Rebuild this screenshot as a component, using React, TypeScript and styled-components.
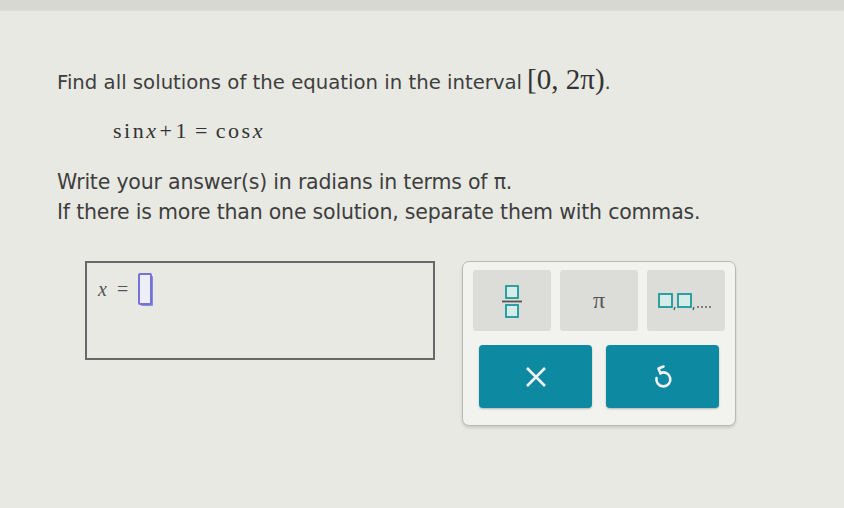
import React from "react";
import styled, { createGlobalStyle } from "styled-components";

const GlobalStyle = createGlobalStyle`
    html, body {
        margin: 0;
        padding: 0;
        background: #e8e9e3;
    }
    body {
        width: 844px;
        height: 508px;
        overflow: hidden;
        font-family: "DejaVu Sans", "Open Sans", sans-serif;
        color: #3e3e3e;
    }
`;

const TopStrip = styled.div`
    height: 10px;
    background: #d7d8d2;
    box-shadow: 0 1px 2px rgba(0, 0, 0, 0.06);
`;

const Question = styled.section`
    padding: 54px 0 0 57px;
    display: flex;
    flex-direction: column;
`;

const Prompt = styled.p`
    margin: 0;
    height: 30px;
    font-size: 19.7px;
    line-height: 30px;
    display: flex;
    align-items: baseline;
    white-space: pre;
`;

const Interval = styled.span`
    font-family: "Liberation Serif", "DejaVu Serif", serif;
    font-size: 29px;
    line-height: 30px;
    color: #333;
    margin-left: 5px;
`;

const Equation = styled.div`
    margin: 25px 0 0 56px;
    display: flex;
    align-items: baseline;
    font-family: "Liberation Serif", "DejaVu Serif", serif;
    font-size: 22px;
    line-height: 24px;
    letter-spacing: 2.5px;
    color: #333;
    white-space: pre;
`;

const Var = styled.i`
    font-style: italic;
`;

const Op = styled.span<{ $space: number }>`
    margin: 0 ${(p) => p.$space}px;
`;

const Instructions = styled.div`
    margin-top: 24px;
    font-size: 20.5px;
    line-height: 30px;
    letter-spacing: -0.2px;
`;

const AnswerRow = styled.div`
    margin: 34px 0 0 28px;
    display: flex;
    align-items: flex-start;
    gap: 27px;
`;

const AnswerBox = styled.div`
    width: 346px;
    height: 95px;
    border: 2px solid #686868;
    display: flex;
    align-items: flex-start;
`;

const AnswerLine = styled.div`
    margin: 10px 0 0 11px;
    display: flex;
    align-items: center;
    gap: 10px;
    font-family: "Liberation Serif", "DejaVu Serif", serif;
    font-size: 20px;
    color: #555;
`;

const Slot = styled.span`
    width: 10px;
    height: 28px;
    border: 2px solid #7472d6;
    border-radius: 2px;
    background: #eeeefb;
    box-shadow: 2px 2px 0 -1px #8b89dc;
`;

const Keypad = styled.div`
    padding: 8px 10px 17px 10px;
    background: #f2f3ef;
    border: 1px solid #b9bab5;
    border-radius: 7px;
    box-shadow: 0 2px 3px rgba(0, 0, 0, 0.12);
    display: flex;
    flex-direction: column;
    gap: 14px;
`;

const KeyRow = styled.div`
    display: grid;
    grid-template-columns: repeat(3, 78px);
    gap: 9px;
`;

const Key = styled.button`
    height: 61px;
    border: none;
    border-radius: 3px;
    background: #dcddd8;
    color: #555;
    display: flex;
    align-items: center;
    justify-content: center;
    padding: 0;
    font-family: "Liberation Serif", "DejaVu Serif", serif;
    font-size: 24px;
`;

const ActionRow = styled.div`
    display: grid;
    grid-template-columns: 113px 113px;
    gap: 14px;
    padding: 0 6px;
`;

const ActionKey = styled.button`
    height: 63px;
    border: none;
    border-radius: 4px;
    background: #0d8aa2;
    box-shadow: 0 1px 2px rgba(0, 0, 0, 0.25);
    display: flex;
    align-items: center;
    justify-content: center;
    padding: 0;
`;

const teal = "#1a9a9a";

const FractionIcon = () => (
    <svg width="22" height="36" viewBox="0 0 22 36">
        <rect x="5" y="3" width="12" height="12" fill="#d6ece9" stroke={teal} strokeWidth="1.8" />
        <line x1="1" y1="18.5" x2="21" y2="18.5" stroke="#555" strokeWidth="1.8" />
        <rect x="5" y="22" width="12" height="12" fill="#d6ece9" stroke={teal} strokeWidth="1.8" />
    </svg>
);

const ListIcon = () => (
    <svg width="56" height="20" viewBox="0 0 56 20">
        <rect x="1" y="3" width="13" height="13" fill="#d6ece9" stroke={teal} strokeWidth="1.8" />
        <path d="M17 16 l-1 3" stroke="#555" strokeWidth="1.3" />
        <rect x="20" y="3" width="13" height="13" fill="#d6ece9" stroke={teal} strokeWidth="1.8" />
        <path d="M36 16 l-1 3" stroke="#555" strokeWidth="1.3" />
        <circle cx="40" cy="16" r="0.9" fill="#555" />
        <circle cx="44" cy="16" r="0.9" fill="#555" />
        <circle cx="48" cy="16" r="0.9" fill="#555" />
        <circle cx="52" cy="16" r="0.9" fill="#555" />
    </svg>
);

const CloseIcon = () => (
    <svg width="22" height="20" viewBox="0 0 22 20">
        <path d="M2 1 L20 19 M20 1 L2 19" stroke="#f2f2f2" strokeWidth="2.6" />
    </svg>
);

const UndoIcon = () => (
    <svg width="22" height="26" viewBox="0 0 22 26">
        <path
            d="M8.5 9 A7 7 0 1 1 4.5 14"
            fill="none"
            stroke="#f2f2f2"
            strokeWidth="2.6"
            strokeLinecap="round"
        />
        <path
            d="M11.5 2.5 L6.5 4.5 L8.5 9.5"
            fill="none"
            stroke="#f2f2f2"
            strokeWidth="2.6"
            strokeLinecap="round"
            strokeLinejoin="round"
        />
    </svg>
);

const App = () => {
    return (
        <>
            <GlobalStyle />
            <TopStrip />
            <Question>
                <Prompt>
                    Find all solutions of the equation in the interval<Interval>[0, 2π)</Interval>.
                </Prompt>
                <Equation>
                    sin<Var>x</Var>
                    <Op $space={1}>+</Op>1<Op $space={6}>=</Op>cos<Var>x</Var>
                </Equation>
                <Instructions>
                    Write your answer(s) in radians in terms of π.
                    <br />
                    If there is more than one solution, separate them with commas.
                </Instructions>
                <AnswerRow>
                    <AnswerBox>
                        <AnswerLine>
                            <Var>x</Var>=<Slot />
                        </AnswerLine>
                    </AnswerBox>
                    <Keypad>
                        <KeyRow>
                            <Key>
                                <FractionIcon />
                            </Key>
                            <Key>π</Key>
                            <Key>
                                <ListIcon />
                            </Key>
                        </KeyRow>
                        <ActionRow>
                            <ActionKey>
                                <CloseIcon />
                            </ActionKey>
                            <ActionKey>
                                <UndoIcon />
                            </ActionKey>
                        </ActionRow>
                    </Keypad>
                </AnswerRow>
            </Question>
        </>
    );
};

export default App;
